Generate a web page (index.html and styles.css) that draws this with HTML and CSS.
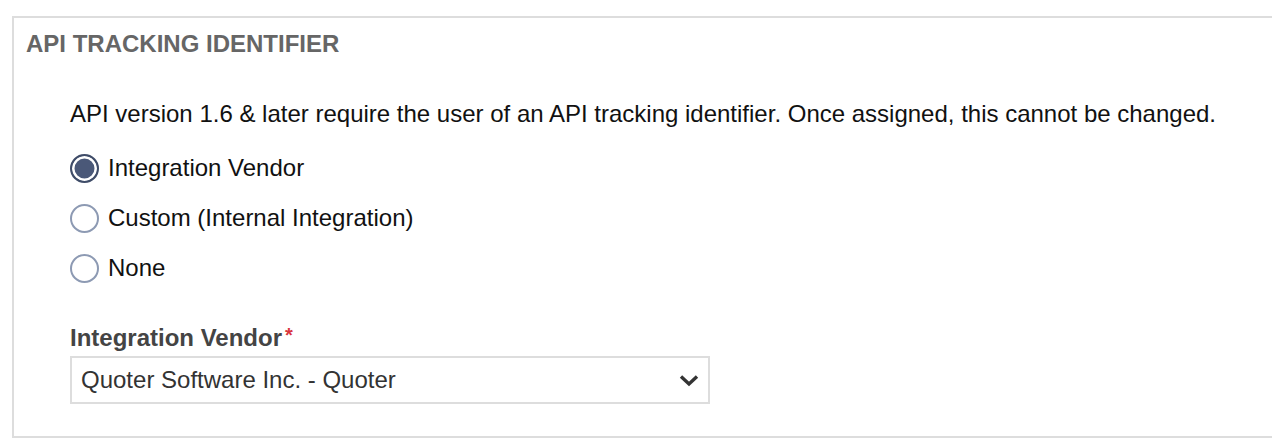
FILE: index.html
```html
<!DOCTYPE html>
<html lang="en">
<head>
<meta charset="utf-8">
<title>API Tracking Identifier</title>
<link rel="stylesheet" href="styles.css">
</head>
<body>
<section class="panel">
  <h2 class="panel-title">API TRACKING IDENTIFIER</h2>
  <div class="panel-body">
    <p class="intro">API version 1.6 &amp; later require the user of an API tracking identifier. Once assigned, this cannot be changed.</p>
    <div class="radio-group">
      <label class="radio-row"><input type="radio" name="tid" class="radio" checked><span>Integration Vendor</span></label>
      <label class="radio-row"><input type="radio" name="tid" class="radio"><span>Custom (Internal Integration)</span></label>
      <label class="radio-row"><input type="radio" name="tid" class="radio"><span>None</span></label>
    </div>
    <div class="field">
      <div class="field-label">Integration Vendor<span class="req">*</span></div>
      <div class="select">
        <span class="select-value">Quoter Software Inc. - Quoter</span>
        <svg class="chevron" width="20" height="13" viewBox="0 0 20 13"><path d="M2 2.5 L10 10 L18 2.5" fill="none" stroke="#333" stroke-width="3.4"/></svg>
      </div>
    </div>
  </div>
</section>
</body>
</html>
```
FILE: styles.css
```css
html, body {
  margin: 0;
  padding: 0;
  background: #fff;
  overflow: hidden;
}
body {
  font-family: "Liberation Sans", Arial, sans-serif;
  color: #111;
}
.panel {
  box-sizing: border-box;
  margin: 16px 0 0 12px;
  width: 1280px;
  height: 422px;
  border: 2px solid #ddd;
}
.panel-title {
  margin: 0;
  padding: 12px 12px 0;
  font-size: 24px;
  line-height: 28px;
  font-weight: bold;
  color: #666;
}
.panel-body {
  padding-left: 56px;
}
.intro {
  margin: 42px 0 0;
  font-size: 24px;
  line-height: 28px;
}
.radio-group {
  margin-top: 25px;
  display: flex;
  flex-direction: column;
  gap: 20px;
}
.radio-row {
  display: flex;
  align-items: center;
  gap: 9px;
  height: 30px;
  font-size: 24px;
}
.radio {
  appearance: none;
  -webkit-appearance: none;
  margin: 0;
  box-sizing: border-box;
  width: 29px;
  height: 29px;
  border-radius: 50%;
  border: 2px solid #8d9ab3;
  background: #fff;
}
.radio:checked {
  border: 2px solid #3f4c68;
  background: #4a5878;
  box-shadow: inset 0 0 0 2.5px #fff;
}
.field {
  margin-top: 38px;
}
.field-label {
  font-size: 24px;
  line-height: 28px;
  font-weight: bold;
  color: #444;
}
.req {
  color: #d9363e;
  font-size: 20px;
  margin-left: 3px;
  vertical-align: 4px;
}
.select {
  box-sizing: border-box;
  margin-top: 4px;
  width: 640px;
  height: 48px;
  border: 2px solid #ddd;
  display: flex;
  align-items: center;
  justify-content: space-between;
  padding: 0 9px 0 9px;
  font-size: 24px;
  color: #333;
}
.chevron {
  display: block;
}
```
